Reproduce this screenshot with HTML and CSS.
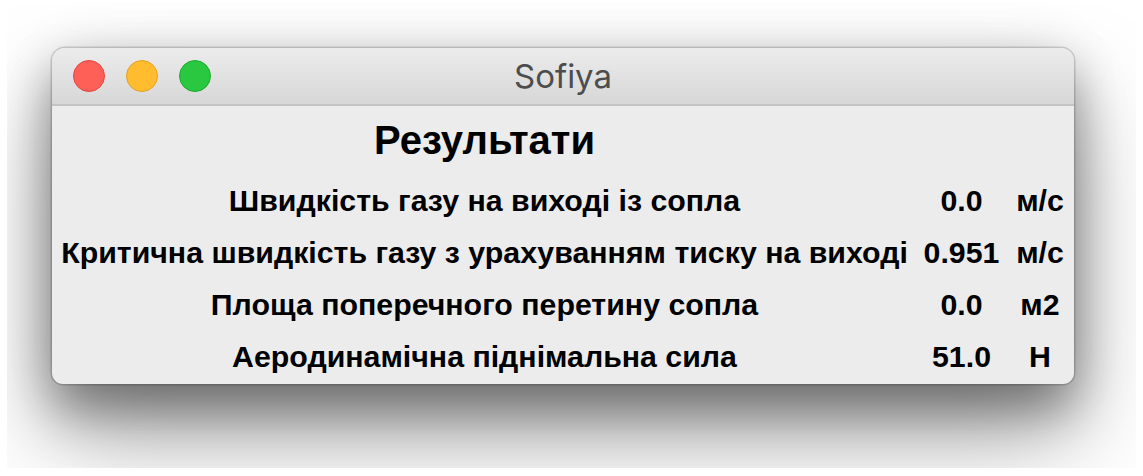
FILE: index.html
```html
<!DOCTYPE html>
<html lang="uk">
<head>
<meta charset="utf-8">
<title>Sofiya</title>
<link rel="stylesheet" href="styles.css">
</head>
<body>
<div class="desk">
  <div class="window">
    <div class="titlebar">
      <div class="lights">
        <span class="light close"></span>
        <span class="light minimize"></span>
        <span class="light zoom"></span>
      </div>
      <div class="title">Sofiya</div>
    </div>
    <div class="results">
      <div class="heading">Результати</div>
      <div class="cell label">Швидкість газу на виході із сопла</div>
      <div class="cell value">0.0</div>
      <div class="cell unit">м/с</div>
      <div class="cell label">Критична швидкість газу з урахуванням тиску на виході</div>
      <div class="cell value">0.951</div>
      <div class="cell unit">м/с</div>
      <div class="cell label">Площа поперечного перетину сопла</div>
      <div class="cell value">0.0</div>
      <div class="cell unit">м2</div>
      <div class="cell label">Аеродинамічна піднімальна сила</div>
      <div class="cell value">51.0</div>
      <div class="cell unit">Н</div>
    </div>
  </div>
</div>
</body>
</html>
```

FILE: styles.css
```css
html, body {
  margin: 0;
  padding: 0;
  background: #ffffff;
}

/* clipped backdrop that holds the window and its drop shadow */
.desk {
  margin: 3px 7px;
  width: 1129px;
  height: 465px;
  overflow: hidden;
  padding: 45px 0 0 45px;
  box-sizing: border-box;
}

.window {
  width: 1022px;
  height: 336px;
  box-sizing: border-box;
  border-radius: 13px 13px 11px 11px;
  background: #ececec;
  box-shadow:
    0 0 0 1.5px rgba(0, 0, 0, 0.16),
    0 28px 50px rgba(0, 0, 0, 0.34),
    0 50px 100px rgba(0, 0, 0, 0.34),
    0 4px 50px rgba(0, 0, 0, 0.1);
  overflow: hidden;
  display: flex;
  flex-direction: column;
}

.titlebar {
  height: 58px;
  flex: none;
  box-sizing: border-box;
  border-bottom: 2px solid #c4c4c4;
  background: linear-gradient(#ececec, #d7d7d7);
  display: flex;
  align-items: center;
  position: relative;
}

.lights {
  display: flex;
  gap: 21px;
  padding-left: 21px;
}

.light {
  width: 32px;
  height: 32px;
  border-radius: 50%;
  box-sizing: border-box;
}

.light.close {
  background: #fe5f57;
  border: 1.5px solid #e2463f;
}

.light.minimize {
  background: #febc2e;
  border: 1.5px solid #e1a325;
}

.light.zoom {
  background: #29c840;
  border: 1.5px solid #1dac2c;
}

.title {
  position: absolute;
  left: 0;
  right: 0;
  text-align: center;
  font-family: Inter, "Noto Sans", sans-serif;
  font-size: 33px;
  color: #4d4d4d;
  pointer-events: none;
}

.results {
  flex: 1;
  display: grid;
  grid-template-columns: 865px 89px 68px;
  grid-template-rows: 69px repeat(4, 52px);
  font-family: "Liberation Sans", Arial, sans-serif;
  font-weight: bold;
  color: #000;
}

.heading {
  grid-column: 1;
  grid-row: 1;
  font-size: 40px;
  text-align: center;
  align-self: center;
}

.cell {
  font-size: 30.3px;
  text-align: center;
  align-self: center;
  white-space: nowrap;
}

.label {
  grid-column: 1;
}

.value {
  grid-column: 2;
}

.unit {
  grid-column: 3;
}
```
